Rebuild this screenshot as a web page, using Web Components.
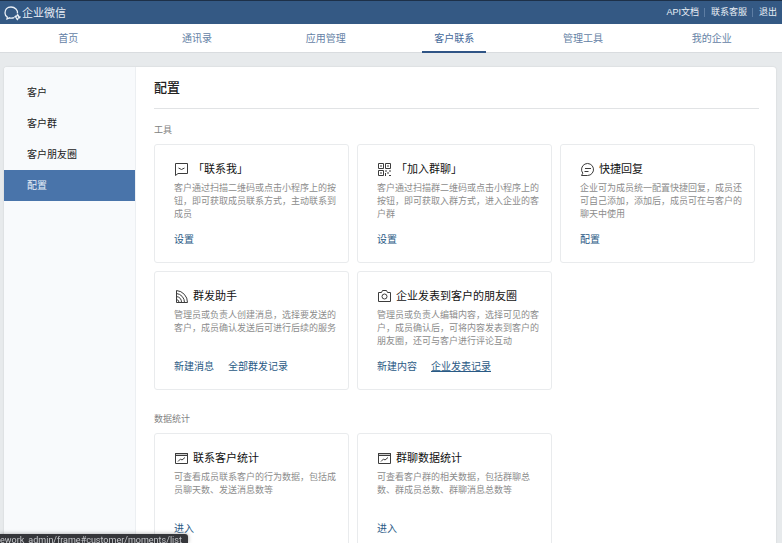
<!DOCTYPE html>
<html lang="zh-CN">
<head>
<meta charset="utf-8">
<meta name="viewport" content="width=device-width, initial-scale=1">
<title>企业微信</title>
<style>
  body {
    margin: 0;
    background: #e7eaec;
    color: #222;
    font-family: "Liberation Sans", "Noto Sans CJK SC", sans-serif;
    font-size: 10px;
  }
</style>
</head>
<body>
<admin-app></admin-app>

<script>
const icons = {
  chat: `<path d="M1.5 1.5h12v10H4l-2.5 2z"/><path d="M4.5 6q3 3 6 0"/>`,
  qr: `<path d="M1.5 1.5h5v5h-5zM8.5 1.5h5v5h-5zM1.5 8.5h5v5h-5z"/>
    <path d="M3 4h2M10 4h2M3 11h2M8 9h2M12 9h2M10 11h2M8.5 11v3M12 13.5h2"/>`,
  reply: `<path d="M1.5 13.5L2.8 11.2A6 6 0 1 1 7.5 13.5z"/><path d="M5 6.5h6M4.5 9.5h4"/>`,
  cast: `<path d="M2.5 1.5v12h11A12 12 0 0 0 2.5 1.5z"/>
    <path d="M2.5 4.5a9 9 0 0 1 8 9M2.5 7.5a6 6 0 0 1 5 6M2.5 10.5a3 3 0 0 1 2.5 3"/>`,
  camera: `<path d="M1.5 3.5h3l1-2h4l1 2h3v9h-12z"/><circle cx="7.5" cy="7.5" r="2.5"/>`,
  chart: `<path d="M1.5 2.5h12v2h-12z" fill="#ccc"/><path d="M1.5 2.5h12v10h-12z"/>
    <path d="M4 10.5l2.5-2.5 1.5 1 3-2.5"/>`,
};

class TopBar extends HTMLElement {
  constructor() {
    super();
    this.attachShadow({ mode: "open" });
  }

  connectedCallback() {
    this.shadowRoot.innerHTML = `
      <style>
        :host {
          display: block;
        }
        header {
          display: flex;
          align-items: center;
          justify-content: space-between;
          height: 24px;
          box-sizing: border-box;
          padding: 0 5px 0 4px;
          border-top: 1px solid #1d3048;
          background: #345984;
          color: #e9eff6;
        }
        .brand {
          display: flex;
          align-items: center;
          color: inherit;
          font-size: 11px;
          line-height: 14px;
          text-decoration: none;
        }
        svg {
          display: block;
          width: 18px;
          height: 16px;
          fill: none;
          stroke: currentColor;
        }
        nav {
          display: flex;
          align-items: center;
          font-size: 9px;
          line-height: 9px;
        }
        nav a {
          color: inherit;
          text-decoration: none;
        }
        nav a + a {
          margin-left: 5px;
          padding-left: 6px;
          border-left: 1px solid #5d7da3;
        }
      </style>
      <header>
        <a class="brand" href="#">
          <svg viewBox="0 0 18 16" aria-hidden="true">
            <path d="M13.5 8.5C14 5 11 2 7 2S1 4.5 1 8c0 1.8 1 3.2 2.3 4L3 14l2.5-1.2q2.5.6 4.5-.2" stroke-width="1.3"/>
            <path d="M13.5 9.8l1 1.4M16 12l-1.4 1M13.5 14.5l-1-1.4M11 12l1.4-1" stroke-width="1.6" stroke-linecap="round"/>
          </svg>
          <span>企业微信</span>
        </a>
        <nav>
          <a href="#">API文档</a>
          <a href="#">联系客服</a>
          <a href="#">退出</a>
        </nav>
      </header>
    `;
  }
}

class MainNav extends HTMLElement {
  constructor() {
    super();
    this.attachShadow({ mode: "open" });
    this.items = ["首页", "通讯录", "应用管理", "客户联系", "管理工具", "我的企业"];
  }

  connectedCallback() {
    const active = this.getAttribute("active");
    this.shadowRoot.innerHTML = `
      <style>
        :host {
          display: block;
          background: #fff;
          border-bottom: 1px solid #d9dcdf;
        }
        nav {
          display: grid;
          grid-template-columns: repeat(6, 1fr);
          height: 28px;
          padding: 0 6px 0 4px;
        }
        a {
          justify-self: center;
          box-sizing: border-box;
          height: 29px;
          padding: 0 12px;
          line-height: 29px;
          color: #6582a6;
          text-decoration: none;
        }
        a.active {
          color: #44699a;
          border-bottom: 2px solid #2f5485;
        }
      </style>
      <nav>
        ${this.items.map((item) => `<a href="#"${item === active ? ' class="active" aria-current="page"' : ""}>${item}</a>`).join("")}
      </nav>
    `;
  }
}

class SideMenu extends HTMLElement {
  constructor() {
    super();
    this.attachShadow({ mode: "open" });
    this.items = ["客户", "客户群", "客户朋友圈", "配置"];
  }

  connectedCallback() {
    const active = this.getAttribute("active");
    this.shadowRoot.innerHTML = `
      <style>
        :host {
          display: block;
          padding-top: 10px;
          background: #f8fafc;
          border-right: 1px solid #eceff2;
        }
        a {
          display: block;
          padding-left: 23px;
          line-height: 31px;
          color: #222;
          text-decoration: none;
        }
        a.active {
          background: #4974aa;
          color: #e6eef8;
        }
      </style>
      <nav>
        ${this.items.map((item) => `<a href="#"${item === active ? ' class="active" aria-current="page"' : ""}>${item}</a>`).join("")}
      </nav>
    `;
  }
}

class CardSection extends HTMLElement {
  constructor() {
    super();
    this.attachShadow({ mode: "open" });
  }

  connectedCallback() {
    this.shadowRoot.innerHTML = `
      <style>
        :host {
          display: block;
        }
        h2 {
          margin: 0 0 7px;
          font-size: 9px;
          font-weight: 400;
          line-height: 13px;
          color: #828282;
        }
        .grid {
          display: grid;
          grid-template-columns: repeat(3, 1fr);
          gap: 8px;
          padding-right: 4px;
        }
      </style>
      <h2>${this.getAttribute("heading")}</h2>
      <div class="grid"><slot></slot></div>
    `;
  }
}

class ToolCard extends HTMLElement {
  constructor() {
    super();
    this.attachShadow({ mode: "open" });
  }

  connectedCallback() {
    this.shadowRoot.innerHTML = `
      <style>
        :host {
          display: flex;
          flex-direction: column;
          box-sizing: border-box;
          min-height: 119px;
          padding: 16px 10px 14px 19px;
          border: 1px solid #e9ebed;
          border-radius: 3px;
          background: #fff;
        }
        h3 {
          display: flex;
          align-items: center;
          gap: 4px;
          margin: 0 0 4px;
          font-size: 11px;
          font-weight: 400;
          line-height: 17px;
          color: #111;
        }
        svg {
          width: 15px;
          height: 15px;
          fill: none;
          stroke: #3c3c3c;
        }
        p {
          margin: 0;
          font-size: 9px;
          line-height: 13px;
          color: #8c8c8c;
        }
        .actions {
          display: flex;
          gap: 14px;
          margin-top: auto;
          line-height: 16px;
        }
        ::slotted(a) {
          color: #2a5a85;
          text-decoration: none;
        }
        ::slotted(a.hover) {
          text-decoration: underline;
        }
      </style>
      <h3>
        <svg viewBox="0 0 15 15" aria-hidden="true">${icons[this.getAttribute("icon")]}</svg>
        <span>${this.getAttribute("heading")}</span>
      </h3>
      <p>${this.getAttribute("text")}</p>
      <div class="actions"><slot></slot></div>
    `;
  }
}

class StatusBar extends HTMLElement {
  constructor() {
    super();
    this.attachShadow({ mode: "open" });
  }

  connectedCallback() {
    this.shadowRoot.innerHTML = `
      <style>
        :host {
          position: fixed;
          left: 0;
          bottom: 0;
          height: 9px;
          padding-right: 6px;
          border-radius: 0 3px 0 0;
          background: #35363a;
          color: #c4c6ca;
          font-family: Roboto, sans-serif;
          font-size: 9px;
          line-height: 13px;
          white-space: nowrap;
          box-shadow: 0 0 4px rgba(0, 0, 0, .35);
        }
      </style>
      <slot></slot>
    `;
  }
}

class AdminApp extends HTMLElement {
  constructor() {
    super();
    this.attachShadow({ mode: "open" });
  }

  connectedCallback() {
    this.shadowRoot.innerHTML = `
      <style>
        :host {
          display: block;
        }
        .panel {
          display: flex;
          margin: 14px 6px 14px 4px;
          background: #fff;
          border-radius: 3px 3px 0 0;
          overflow: hidden;
          box-shadow: 0 0 2px rgba(0, 0, 0, .12);
        }
        side-menu {
          flex: 0 0 131px;
        }
        main {
          flex: 1;
          min-width: 0;
          padding: 0 17px 24px 18px;
        }
        h1 {
          margin: 0 0 15px;
          padding: 11px 0;
          border-bottom: 1px solid #e1e3e5;
          font-size: 13px;
          font-weight: 500;
          line-height: 19px;
        }
        card-section + card-section {
          margin-top: 23px;
        }
      </style>
      <top-bar></top-bar>
      <main-nav active="客户联系"></main-nav>
      <div class="panel">
        <side-menu active="配置"></side-menu>
        <main>
          <h1>配置</h1>
          <card-section heading="工具">
            <tool-card icon="chat" heading="「联系我」" text="客户通过扫描二维码或点击小程序上的按钮，即可获取成员联系方式，主动联系到成员">
              <a href="#">设置</a>
            </tool-card>
            <tool-card icon="qr" heading="「加入群聊」" text="客户通过扫描群二维码或点击小程序上的按钮，即可获取入群方式，进入企业的客户群">
              <a href="#">设置</a>
            </tool-card>
            <tool-card icon="reply" heading="快捷回复" text="企业可为成员统一配置快捷回复，成员还可自己添加，添加后，成员可在与客户的聊天中使用">
              <a href="#">配置</a>
            </tool-card>
            <tool-card icon="cast" heading="群发助手" text="管理员或负责人创建消息，选择要发送的客户，成员确认发送后可进行后续的服务">
              <a href="#">新建消息</a>
              <a href="#">全部群发记录</a>
            </tool-card>
            <tool-card icon="camera" heading="企业发表到客户的朋友圈" text="管理员或负责人编辑内容，选择可见的客户，成员确认后，可将内容发表到客户的朋友圈，还可与客户进行评论互动">
              <a href="#">新建内容</a>
              <a href="#" class="hover">企业发表记录</a>
            </tool-card>
          </card-section>
          <card-section heading="数据统计">
            <tool-card icon="chart" heading="联系客户统计" text="可查看成员联系客户的行为数据，包括成员聊天数、发送消息数等">
              <a href="#">进入</a>
            </tool-card>
            <tool-card icon="chart" heading="群聊数据统计" text="可查看客户群的相关数据，包括群聊总数、群成员总数、群聊消息总数等">
              <a href="#">进入</a>
            </tool-card>
          </card-section>
        </main>
      </div>
      <status-bar>ework_admin/frame#customer/moments/list</status-bar>
    `;
  }
}

customElements.define("top-bar", TopBar);
customElements.define("main-nav", MainNav);
customElements.define("side-menu", SideMenu);
customElements.define("card-section", CardSection);
customElements.define("tool-card", ToolCard);
customElements.define("status-bar", StatusBar);
customElements.define("admin-app", AdminApp);
</script>
</body>
</html>
